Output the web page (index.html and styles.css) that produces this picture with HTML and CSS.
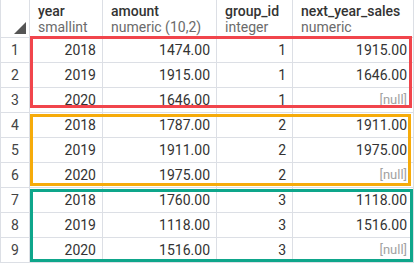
FILE: index.html
```html
<!DOCTYPE html>
<html>
<head>
    <title>next_year_sales</title>
    <meta charset="UTF-8">
    <link rel="stylesheet" href="styles.css">
</head>
<body>
    <div class="result-grid">
        <div class="row head">
            <div class="cell corner"></div>
            <div class="cell"><span class="col-name">year</span><span class="col-type">smallint</span></div>
            <div class="cell"><span class="col-name">amount</span><span class="col-type">numeric (10,2)</span></div>
            <div class="cell"><span class="col-name">group_id</span><span class="col-type">integer</span></div>
            <div class="cell"><span class="col-name">next_year_sales</span><span class="col-type">numeric</span></div>
        </div>
        <div class="row">
            <div class="cell num">1</div><div class="cell">2018</div><div class="cell">1474.00</div><div class="cell">1</div><div class="cell">1915.00</div>
        </div>
        <div class="row">
            <div class="cell num">2</div><div class="cell">2019</div><div class="cell">1915.00</div><div class="cell">1</div><div class="cell">1646.00</div>
        </div>
        <div class="row">
            <div class="cell num">3</div><div class="cell">2020</div><div class="cell">1646.00</div><div class="cell">1</div><div class="cell null">[null]</div>
        </div>
        <div class="row">
            <div class="cell num">4</div><div class="cell">2018</div><div class="cell">1787.00</div><div class="cell">2</div><div class="cell">1911.00</div>
        </div>
        <div class="row">
            <div class="cell num">5</div><div class="cell">2019</div><div class="cell">1911.00</div><div class="cell">2</div><div class="cell">1975.00</div>
        </div>
        <div class="row">
            <div class="cell num">6</div><div class="cell">2020</div><div class="cell">1975.00</div><div class="cell">2</div><div class="cell null">[null]</div>
        </div>
        <div class="row">
            <div class="cell num">7</div><div class="cell">2018</div><div class="cell">1760.00</div><div class="cell">3</div><div class="cell">1118.00</div>
        </div>
        <div class="row">
            <div class="cell num">8</div><div class="cell">2019</div><div class="cell">1118.00</div><div class="cell">3</div><div class="cell">1516.00</div>
        </div>
        <div class="row">
            <div class="cell num">9</div><div class="cell">2020</div><div class="cell">1516.00</div><div class="cell">3</div><div class="cell null">[null]</div>
        </div>

        <!-- marcas de los grupos -->
        <div class="group-box group-1"></div>
        <div class="group-box group-2"></div>
        <div class="group-box group-3"></div>
    </div>
</body>
</html>
```

FILE: styles.css
```css
body {
    margin: 0;
    background-color: #fff;
    font-family: Roboto, "Liberation Sans", sans-serif;
    font-size: 14px;
    color: #333;
}

.result-grid {
    position: relative;
    width: 414px;
}

.row {
    display: grid;
    grid-template-columns: 30px 73px 114px 76px 121px;
    height: 25px;
}

.row.head {
    height: 38px;
}

.cell {
    box-sizing: border-box;
    border-right: 1px solid #dcdfe5;
    border-bottom: 1px solid #dcdfe5;
    padding: 0 6px 0 8px;
    text-align: right;
    line-height: 24px;
    white-space: nowrap;
    overflow: hidden;
}

.cell:first-child {
    border-left: 1px solid #dcdfe5;
}

.cell.num {
    padding: 0;
    text-align: center;
    color: #444;
}

.cell.null {
    color: #a2a2a2;
    font-size: 13px;
}

.head .cell {
    display: flex;
    flex-direction: column;
    text-align: left;
    padding-top: 3px;
    line-height: 16px;
}

.col-name {
    font-weight: 500;
    color: #333;
}

.col-type {
    color: #6b6b6b;
}

/* triangulo de la esquina */
.head .corner {
    position: relative;
    padding: 0;
}

.head .corner::after {
    content: "";
    position: absolute;
    right: 3px;
    bottom: 3px;
    width: 0;
    height: 0;
    border-left: 12px solid transparent;
    border-bottom: 12px solid #555;
}

/* Recuadros de cada grupo */
.group-box {
    position: absolute;
    box-sizing: border-box;
    border: 3px solid;
}

.group-1 {
    left: 30px;
    top: 36px;
    width: 382px;
    height: 72px;
    border-color: #f1454c;
}

.group-2 {
    left: 30px;
    top: 114px;
    width: 381px;
    height: 72px;
    border-color: #f6ab0a;
}

.group-3 {
    left: 30px;
    top: 189px;
    width: 383px;
    height: 73px;
    border-color: #0ea68b;
}
```
